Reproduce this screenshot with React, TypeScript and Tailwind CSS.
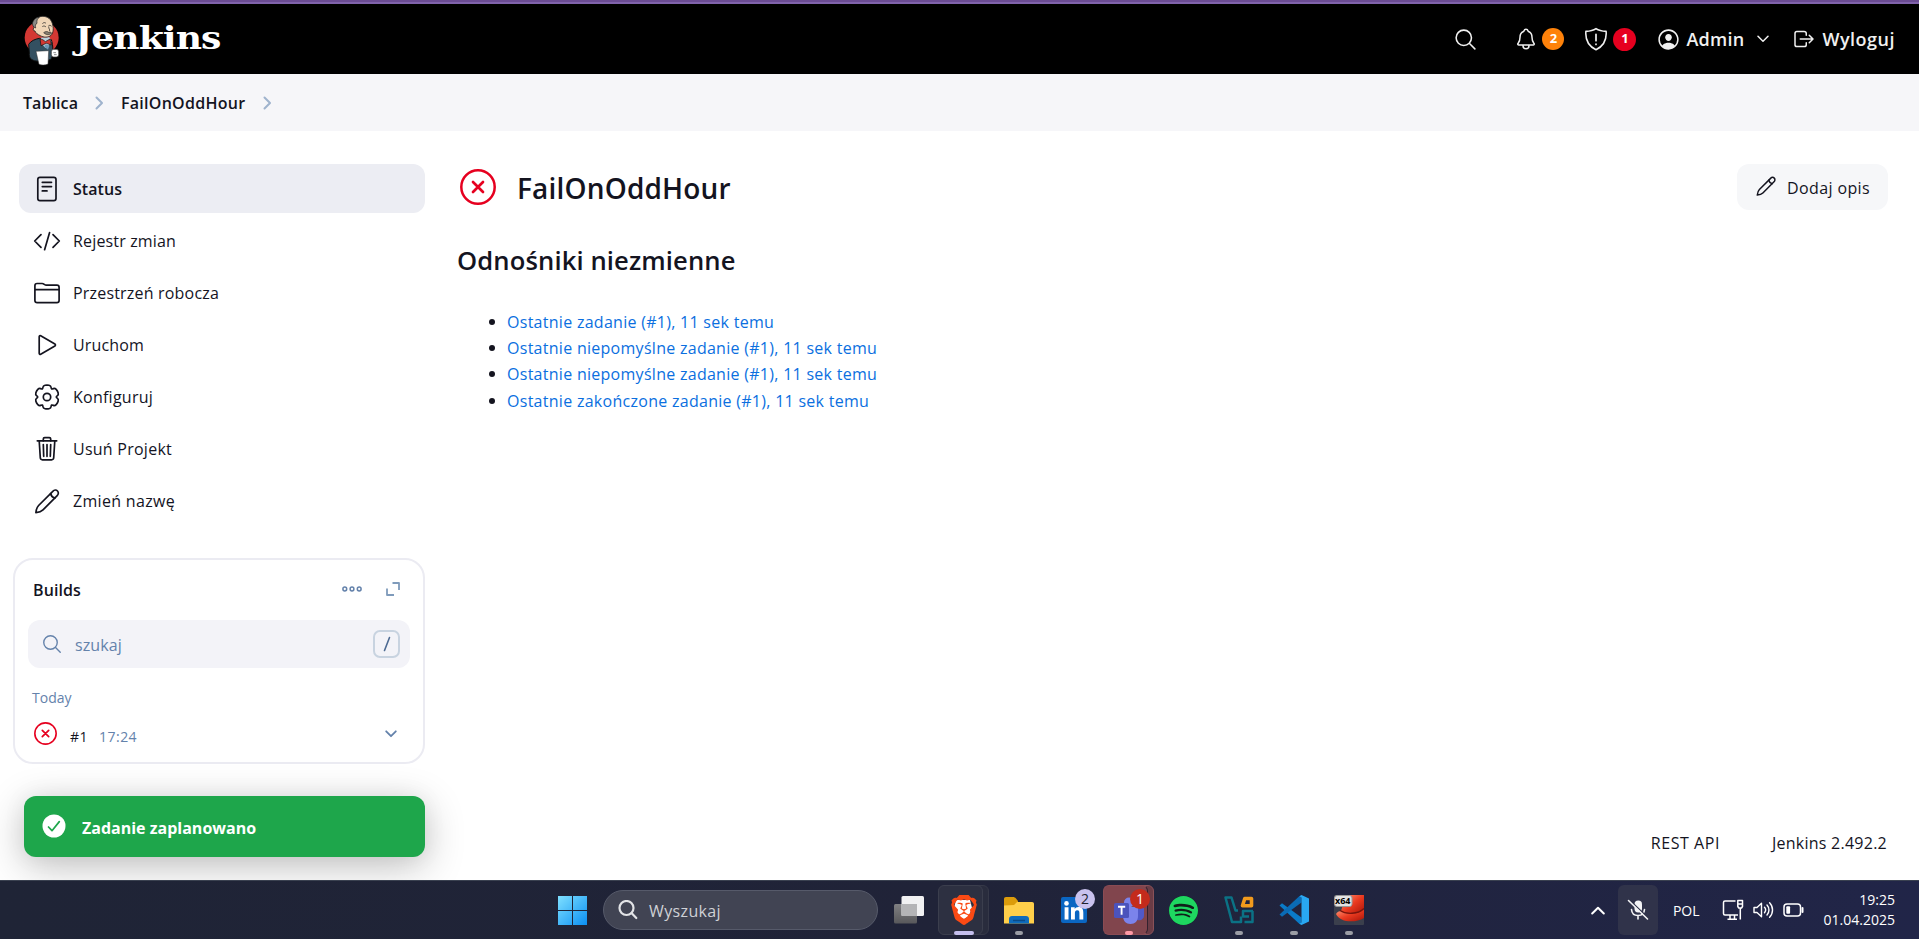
import React from 'react';
import { IoSearchOutline, IoNotificationsOutline, IoPersonCircleOutline, IoLogOutOutline } from 'react-icons/io5';
import { SiBrave, SiSpotify } from 'react-icons/si';

type IconProps = { children: React.ReactNode; size?: number; className?: string; width?: number };

function Glyph({ children, size = 28, className = '', width = 1.7 }: IconProps) {
  return (
    <svg
      viewBox="0 0 28 28"
      width={size}
      height={size}
      fill="none"
      stroke="currentColor"
      strokeWidth={width}
      strokeLinecap="round"
      strokeLinejoin="round"
      className={`shrink-0 ${className}`}
    >
      {children}
    </svg>
  );
}

function gearPath() {
  const pts: [number, number][] = [];
  for (let k = 0; k < 6; k++) {
    for (const [r, d] of [[9.3, -27], [11.9, -19], [12.2, 0], [11.9, 19], [9.3, 27]]) {
      const a = ((-90 + 60 * k + d) * Math.PI) / 180;
      pts.push([14 + r * Math.cos(a), 14 + r * Math.sin(a)]);
    }
  }
  const mid = (a: [number, number], b: [number, number]) => `${((a[0] + b[0]) / 2).toFixed(2)} ${((a[1] + b[1]) / 2).toFixed(2)}`;
  let d = `M${mid(pts[pts.length - 1], pts[0])}`;
  pts.forEach((p, i) => {
    d += `Q${p[0].toFixed(2)} ${p[1].toFixed(2)} ${mid(p, pts[(i + 1) % pts.length])}`;
  });
  return d + 'Z';
}

const pencil = (
  <>
    <path d="M2.900 25.600c.3-3.400 1-5.400 2.700-7.100L19.800 4.300c1.400-1.400 3.500-1.500 4.700-.3s1.100 3.300-.3 4.700L10 22.900c-1.700 1.700-3.700 2.400-7.100 2.700z" />
    <path d="M17.600 6.500c.5 2.400 2.100 4 4.400 4.500" />
  </>
);

const tasks = [
  {
    label: 'Rejestr zmian',
    tracking: 'tracking-[0.16px]',
    icon: <path d="M8 7.700 1.700 14 8 20.300M20 7.700l6.300 6.300-6.300 6.300M16.600 5.500l-5 17.200" />,
  },
  {
    label: 'Przestrzeń robocza',
    tracking: 'tracking-[0.19px]',
    icon: <path d="M1.900 21.500V6.700c0-1.400.8-2.200 2.200-2.200h5c2 0 2.300 1.700 4.300 1.700h10.500c1.400 0 2.200.8 2.200 2.200v13.100c0 1.400-.8 2.200-2.200 2.200H4.100c-1.400 0-2.200-.8-2.200-2.200zM1.900 10.700h24.200" />,
  },
  {
    label: 'Uruchom',
    tracking: 'tracking-[0.15px]',
    icon: <path d="M6.200 5.700v16.600c0 .9.800 1.300 1.500.9l14.200-8.300c.7-.4.7-1.400 0-1.800L7.700 4.800c-.7-.4-1.500 0-1.500.9z" />,
  },
  {
    label: 'Konfiguruj',
    tracking: 'tracking-[0.25px]',
    icon: (
      <>
        <path d={gearPath()} />
        <circle cx="14" cy="14" r="3.700" />
      </>
    ),
  },
  {
    label: 'Usuń Projekt',
    tracking: 'tracking-[0.25px]',
    icon: (
      <>
        <path d="M4.300 5.800h19.400M6.200 5.800l1.100 17c.1 1.200.9 2 2.100 2h9.200c1.200 0 2-.8 2.100-2l1.100-17" />
        <path d="M10.300 5.800V4c0-.9.500-1.400 1.400-1.400h4.600c.9 0 1.400.5 1.400 1.400v1.800M10.300 9.500l.4 11.800M14 9.500v11.800M17.700 9.500l-.4 11.800" />
      </>
    ),
  },
  { label: 'Zmień nazwę', tracking: 'tracking-[0.31px]', icon: pencil },
];

function Butler() {
  return (
    <svg viewBox="0 0 180 192" width="60" height="64" className="shrink-0">
      <ellipse cx="77" cy="92" rx="51" ry="50" fill="#d33833" />
      <path d="M38 112c6-10 20-16 32-18l36 4c6 18 6 42 0 58-14 8-30 8-46 6-14-2-22-10-20-24z" fill="#335061" stroke="#111" strokeWidth="3" />
      <path d="M74 92c2 16 8 28 18 32l14-20-6-14z" fill="#b9d2df" />
      <path d="M54 62c-5-12 0-28 18-33 17-4 32 4 37 20 4 14 4 28-4 36-8 7-22 7-32 1-9-4-14-8-16-14-6 0-7-5-3-10z" fill="#f0d6b7" stroke="#222" strokeWidth="2.500" />
      <path d="M70 31c-7 4-8 10-7 18-6 2-5 8-4 14-9-3-12-14-7-21 3-6 10-12 18-11z" fill="#8a8a86" stroke="#222" strokeWidth="2" />
      <path d="M80 58c3-2 7-1 9 1M98 56c2-2 6-1 8 1M80 49c3-3 7-3 9-1M98 60c-1 5 5 7 3 11" fill="none" stroke="#222" strokeWidth="2.200" strokeLinecap="round" />
      <path d="M83 77c6-5 12-4 15-1 5-2 8 0 9 3-7 5-16 6-24-2z" fill="#867e70" stroke="#222" strokeWidth="1.800" />
      <path d="M72 96c6 0 12 4 16 8l14-8 4 18-15-5-16 7z" fill="#d33833" stroke="#111" strokeWidth="2" />
      <path d="M84 118l6-6 10 4-4 12z" fill="#6d97b5" />
      <path d="M60 133l38-2-2 40c-8 4-20 4-27 1z" fill="#fff" stroke="#333" strokeWidth="1.500" />
      <rect x="106" y="127" width="22" height="23" rx="7" fill="#fff" stroke="#333" strokeWidth="2" />
      <path d="M112 137h8M114 143h8" stroke="#555" strokeWidth="2" />
    </svg>
  );
}

function ErrorBall({ size }: { size: number }) {
  return (
    <svg viewBox="0 0 36 36" width={size} height={size} fill="none" stroke="#e6001f" strokeLinecap="round" className="shrink-0">
      <circle cx="18" cy="18" r="16.700" strokeWidth="2.500" />
      <path d="M13 13l10 10M23 13 13 23" strokeWidth="2.700" />
    </svg>
  );
}

function Header() {
  return (
    <header className="flex h-[70px] items-center bg-black pl-4 pr-6 text-white">
      <Butler />
      <span className="-ml-px -mt-[3px] origin-left scale-x-[1.130] font-[DejaVu_Serif,serif] text-[32px] font-bold leading-[40px] tracking-[-0.800px]">Jenkins</span>
      <div className="ml-auto flex items-center text-[18px] font-semibold text-[#f0f0f0]">
        <IoSearchOutline className="mr-[36px] size-[25px]" />
        <IoNotificationsOutline className="mr-[4px] size-[24px]" />
        <span className="mr-[20px] flex size-[22px] items-center justify-center rounded-full bg-[#fe820a] text-[13px] font-bold text-white">2</span>
        <Glyph size={24} className="mr-[5px]" width={1.800}>
          <path d="M14 1.800c3 2 7 3 11.800 3.300.8 9.300-2 16.600-11.800 21.400C4.200 21.700 1.400 14.400 2.200 5.100 7 4.800 11 3.800 14 1.800z" />
          <path d="M14 8.500v7.500M14 20v.4" strokeWidth="2" />
        </Glyph>
        <span className="mr-[20px] flex size-[23px] items-center justify-center rounded-full bg-[#e6001f] text-[13px] font-bold text-white">1</span>
        <IoPersonCircleOutline className="mr-[5px] size-[25px]" />
        <span className="tracking-[0.250px]">Admin</span>
        <svg width="12" height="8" viewBox="0 0 12 8" fill="none" stroke="currentColor" strokeWidth="1.500" strokeLinecap="round" strokeLinejoin="round" className="ml-[13px] mr-[23px]">
          <path d="M1 1.300l5 5 5-5" />
        </svg>
        <IoLogOutOutline className="mr-[6px] size-[24px]" />
        <span className="tracking-[0.500px]">Wyloguj</span>
      </div>
    </header>
  );
}

function Crumb() {
  return (
    <svg width="9" height="14" viewBox="0 0 9 14" fill="none" stroke="#9fb3cd" strokeWidth="2" strokeLinecap="round" strokeLinejoin="round">
      <path d="M1.500 1.500 7 7l-5.500 5.500" />
    </svg>
  );
}

function Sidebar() {
  return (
    <aside className="w-[425px] shrink-0">
      <nav className="ml-[19px] flex flex-col gap-[3px]">
        <a className="flex h-[49px] items-center rounded-xl bg-[#ecedf3] pl-[14px] font-semibold tracking-[0.05px]">
          <Glyph className="mr-[12px]">
            <rect x="4.800" y="2.300" width="18.200" height="23.400" rx="2.200" />
            <path d="M9.300 7.300h9.200M9.300 11.600h9.200M9.300 15.900h4.700" />
          </Glyph>
          Status
        </a>
        {tasks.map((t) => (
          <a key={t.label} className={`flex h-[49px] items-center pl-[14px] ${t.tracking}`}>
            <Glyph className="mr-[12px]">{t.icon}</Glyph>
            {t.label}
          </a>
        ))}
      </nav>

      <section className="ml-[13px] mt-[33px] flex h-[206px] flex-col rounded-[20px] border-2 border-[#ebebf2] pl-[13px] pr-[13px]">
        <div className="mt-[15px] flex h-[28px] items-center pl-[5px]">
          <h2 className="mt-px font-semibold tracking-[0.1px]">Builds</h2>
          <svg width="20" height="6" viewBox="0 0 20 6" fill="none" stroke="#6482ab" strokeWidth="1.500" className="ml-auto mr-[24px]">
            <circle cx="2.800" cy="3" r="1.900" />
            <circle cx="10" cy="3" r="1.900" />
            <circle cx="17.200" cy="3" r="1.900" />
          </svg>
          <svg width="14" height="14" viewBox="0 0 14 14" fill="none" stroke="#7f9bbb" strokeWidth="1.800" strokeLinejoin="round" className="mr-[10px]">
            <path d="M6.500 1H13v7M1 6.500V13h7" />
          </svg>
        </div>
        <div className="mt-[17px] flex h-[48px] items-center rounded-xl bg-[#f3f3f8] pl-[13px] pr-[10px] text-[#6482ab]">
          <IoSearchOutline className="size-[22px]" />
          <span className="ml-[12px] mt-px tracking-[0.12px]">szukaj</span>
          <kbd className="ml-auto flex h-[28px] w-[27px] items-center justify-center rounded-[7px] border-2 border-[#c8d3e0]">
            <svg width="8" height="16" viewBox="0 0 8 16" stroke="#4d6a92" strokeWidth="1.600" strokeLinecap="round">
              <path d="M6.500 1.500 1.500 14.500" />
            </svg>
          </kbd>
        </div>
        <p className="mt-[20px] pl-[4px] text-sm text-[#6482ab]">Today</p>
        <div className="mt-[14px] flex h-[26px] items-center pl-[6px] text-sm">
          <span className="-mt-[4px] flex"><ErrorBall size={23} /></span>
          <span className="ml-[13px] mt-[3px] tracking-[0.500px]">#1</span>
          <span className="ml-[11px] mt-[3px] tracking-[0.46px] text-[#6482ab]">17:24</span>
          <svg width="12" height="8" viewBox="0 0 12 8" fill="none" stroke="#6482ab" strokeWidth="1.800" strokeLinecap="round" strokeLinejoin="round" className="-mt-[2px] ml-auto mr-[13px]">
            <path d="M1.200 1.300 6 6.200l4.800-4.900" />
          </svg>
        </div>
      </section>

      <div className="ml-[24px] mt-[32px] flex h-[61px] items-center rounded-xl bg-[#1ea64b] pl-[18px] font-bold text-white shadow-[0_10px_40px_rgba(0,0,0,0.24),0_0_24px_rgba(0,0,0,0.06)]">
        <svg width="24" height="24" viewBox="0 0 24 24" className="-mt-[2px]">
          <circle cx="12" cy="12" r="11.500" fill="#fff" />
          <path d="M6.500 13l3.500 3.700L17.300 7.600" fill="none" stroke="#1ea64b" strokeWidth="1.700" strokeLinecap="round" strokeLinejoin="round" />
        </svg>
        <span className="ml-[16px] mt-[2px]">Zadanie zaplanowano</span>
      </div>
    </aside>
  );
}

const links = [
  'Ostatnie zadanie (#1), 11 sek temu',
  'Ostatnie niepomyślne zadanie (#1), 11 sek temu',
  'Ostatnie niepomyślne zadanie (#1), 11 sek temu',
  'Ostatnie zakończone zadanie (#1), 11 sek temu',
];

function Main() {
  return (
    <main className="flex flex-1 flex-col pl-[33px] pr-[31px]">
      <div className="flex h-[46px] items-center">
        <span className="ml-[2px] flex"><ErrorBall size={36} /></span>
        <h1 className="ml-[21px] mt-px text-[28px] font-semibold tracking-[0.18px]">FailOnOddHour</h1>
        <button className="ml-auto flex h-[46px] w-[151px] items-center rounded-xl bg-[#f6f7f9] pl-[18px] tracking-[0.38px]">
          <Glyph size={22} width={1.900} className="-mt-[2px] mr-[10px]">{pencil}</Glyph>
          <span className="mt-px">Dodaj opis</span>
        </button>
      </div>
      <h2 className="-ml-px mt-[33px] text-[25.600px] font-semibold leading-[36px] tracking-[0.120px]">Odnośniki niezmienne</h2>
      <ul className="mt-[30px] text-[#0b6fe0]">
        {links.map((l, i) => (
          <li key={i} className="flex h-[26.200px] items-center tracking-[0.280px]">
            <span className="ml-[31px] mr-[12px] size-[6px] rounded-full bg-[#14141f]" />
            {l}
          </li>
        ))}
      </ul>
      <footer className="mb-[25px] mt-auto flex justify-end">
        <span className="mr-[52px] tracking-[0.550px]">REST API</span>
        <span className="mr-px tracking-[0.25px]">Jenkins 2.492.2</span>
      </footer>
    </main>
  );
}

function Slot({ children, mark = '' }: { children: React.ReactNode; mark?: string }) {
  return (
    <div className="relative flex h-[59px] w-[55px] shrink-0 items-center justify-center">
      {children}
      {mark && <span className={`absolute bottom-[5px] left-1/2 h-1 -translate-x-1/2 rounded-full ${mark}`} />}
    </div>
  );
}

function Taskbar() {
  return (
    <div className="flex h-[59px] items-center border-t border-[#3a4150] bg-gradient-to-r from-[#1f2436] via-[#202338] to-[#212548] text-white">
      <div className="ml-[545px] flex items-center">
        <Slot>
          <svg width="29" height="29" viewBox="0 0 29 29" className="mt-px">
            <defs>
              <linearGradient id="win" x1="0" y1="0" x2="1" y2="1">
                <stop offset="0" stopColor="#7fe0ff" />
                <stop offset="1" stopColor="#0b8ff2" />
              </linearGradient>
            </defs>
            <path d="M0 0h14v14H0zM15 0h14v14H15zM0 15h14v14H0zM15 15h14v14H15z" fill="url(#win)" />
          </svg>
        </Slot>
        <div className="ml-[3px] mr-[3px] flex h-[40px] w-[275px] items-center rounded-full border border-[#565a6a] bg-[#414453] pl-[14px] text-[#cfd1d6]">
          <svg width="20" height="20" viewBox="0 0 20 20" fill="none" stroke="#e2e3e6" strokeWidth="2.200" strokeLinecap="round">
            <circle cx="8.500" cy="8" r="7" />
            <path d="M13.500 13l4.800 5" />
          </svg>
          <span className="ml-[11px] mt-px tracking-[0.370px]">Wyszukaj</span>
        </div>
        <Slot>
          <svg width="30" height="28" viewBox="0 0 30 28">
            <defs>
              <linearGradient id="pane" x1="0" y1="0" x2="0" y2="1">
                <stop offset="0" stopColor="#808082" />
                <stop offset="1" stopColor="#58585b" />
              </linearGradient>
            </defs>
            <rect x="0" y="8" width="23" height="19.500" rx="1.500" fill="url(#pane)" />
            <rect x="7.500" y="0" width="22.500" height="20" rx="1.500" fill="#f1f1f2" />
            <path d="M7.500 8H23v12H7.500z" fill="#b4b4b6" />
          </svg>
        </Slot>
        <Slot mark="w-5 bg-[#c5bfee]">
          <span className="absolute left-[6px] top-[4px] h-[50px] w-[47px] rounded-md border border-[#353848] bg-[#292c3d]" />
          <span className="absolute left-[2px] top-[4px] h-[50px] w-[45px] rounded-md border border-[#3b3e4d] bg-[#2d3041]" />
          <svg width="26" height="31" viewBox="0 0 26 31" className="absolute left-[14px] top-[13px]">
            <path d="M6 6h14l2 8-3 8-6 4-6-4-3-8z" fill="#fff" />
          </svg>
          <SiBrave className="relative size-[30px] text-[#fb4a14]" />
        </Slot>
        <Slot mark="w-2 bg-[#9b9da5]">
          <svg width="30" height="27" viewBox="0 0 30 27" className="mt-px">
            <path d="M0 6V2C0 .8.700 0 2 0h7c1.400 0 2 .5 3 1.500L14 4v6H0z" fill="#dc9c0b" />
            <path d="M0 8.500l10-.5 3-3h15c1.300 0 2 .7 2 2v19.500H0z" fill="#ffcf4a" />
            <path d="M5 26.500V22c0-1.800 1.200-3 3-3h14c1.800 0 3 1.200 3 3v4.500z" fill="#0f6cbd" />
            <path d="M9 23.500h12" stroke="#0a4b88" strokeWidth="1.500" />
          </svg>
        </Slot>
        <Slot>
          <span className="flex size-[26px] items-center justify-center rounded-[2px] bg-[#0a66c2]">
            <svg width="20" height="19" viewBox="0 0 20 19" fill="#fff">
              <circle cx="2.500" cy="2.400" r="2.300" />
              <path d="M.6 6.200h3.900v12.300H.6zM7 6.200h3.700v1.700c.6-1.100 1.900-2 3.900-2 3.900 0 4.700 2.500 4.700 5.900v6.700h-3.900v-6c0-1.400 0-3.200-2.100-3.200s-2.400 1.500-2.400 3.100v6.100H7z" />
            </svg>
          </span>
          <span className="absolute left-[29px] top-[8px] flex size-5 items-center justify-center rounded-full bg-[#c9c2ee] text-[14px] text-[#20222e]">2</span>
        </Slot>
        <Slot mark="w-2 bg-[#ff9aa6]">
          <span className="absolute left-[6px] top-[4px] h-[50px] w-[47px] rounded-md border border-[#8a5158] bg-[#6a3c46]" />
          <span className="absolute left-[2px] top-[4px] h-[50px] w-[45px] rounded-md border border-r-[#33222f] border-[#8a4c54] bg-[#81454d]" />
          <svg width="30" height="28" viewBox="0 0 30 28" className="relative mt-px">
            <circle cx="15" cy="5.500" r="5" fill="#7b83eb" />
            <path d="M22 10h8v8c0 4-3 6-7 5z" fill="#5059c9" />
            <path d="M9 10h15v9c0 5-3 8-7.500 8S9 24 9 19z" fill="#7b83eb" />
            <rect x="0" y="6" width="15" height="15" rx="1.500" fill="#4b53bc" />
            <path d="M4 9.800h7.200M7.600 9.800v8" stroke="#fff" strokeWidth="1.900" />
          </svg>
          <span className="absolute left-[29px] top-[8px] flex size-5 items-center justify-center rounded-full bg-[#c42b1c] text-[14px]">1</span>
        </Slot>
        <Slot>
          <span className="flex size-[29px] items-center justify-center rounded-full bg-[#10201a]">
            <SiSpotify className="size-[29px] text-[#1ed760]" />
          </span>
        </Slot>
        <Slot mark="w-2 bg-[#9b9da5]">
          <svg width="30" height="28" viewBox="0 0 30 28" fill="none" strokeWidth="2.500" strokeLinejoin="round">
            <path d="M14 14.500h-2.500L7.500 1.500h-6l6.500 24.500h9v-5.500" stroke="#0b7285" />
            <path d="M29 15H19v5.500h6M28.500 15v11H20.500" stroke="#0b7285" />
            <path d="M20.800 2.500h6.700v7.300h-9z" stroke="#f29b1d" strokeWidth="3.600" />
          </svg>
        </Slot>
        <Slot mark="w-2 bg-[#9b9da5]">
          <svg width="30" height="30" viewBox="0 0 30 30">
            <path d="M.5 10.500 3 8.300l19.500 14.200V29.500L20.500 29z" fill="#0a7bc8" />
            <path d="M.5 19.500 3 21.700 22.500 7.500V.5L20.500 1z" fill="#0a6bb5" />
            <path d="M22.500 0 30 3.500v23L22.500 30l-2-1.200 2-1.300v-25l-2-1.300z" fill="#29a8f2" />
          </svg>
        </Slot>
        <Slot mark="w-2 bg-[#9b9da5]">
          <svg width="30" height="30" viewBox="0 0 30 30">
            <defs>
              <linearGradient id="disc" x1="0" y1="0" x2="1" y2="1">
                <stop offset="0" stopColor="#ff9a7a" />
                <stop offset=".5" stopColor="#ea3a20" />
                <stop offset="1" stopColor="#a81408" />
              </linearGradient>
            </defs>
            <rect width="30" height="30" rx="1" fill="#3b3f4c" />
            <path d="M12 0h18v14c-3 6-16 7-23 2z" fill="url(#disc)" />
            <path d="M2 19c1-2 3-3 5-3 6 4 17 4 23-2v9c-8 5-24 5-28-4z" fill="url(#disc)" />
            <path d="M6 15.500c6 4 18 4 24-2" stroke="#7a150c" strokeWidth="1.300" fill="none" />
            <rect x=".5" y=".5" width="17.500" height="11" rx="2.500" fill="#e3e3e3" stroke="#999" />
          </svg>
          <span className="absolute left-[14px] top-[15px] text-[9px] font-bold leading-[10px] text-black">x64</span>
        </Slot>
      </div>

      <div className="ml-auto flex items-center pr-[24px]">
        <svg width="14" height="9" viewBox="0 0 14 9" fill="none" stroke="#fff" strokeWidth="2" strokeLinecap="round" strokeLinejoin="round">
          <path d="M1.200 7.500 7 1.700l5.800 5.800" />
        </svg>
        <div className="ml-[13px] flex h-[50px] w-[40px] items-center justify-center rounded-md bg-[#30334a]">
          <svg width="22" height="22" viewBox="0 0 22 22" fill="none" stroke="#f3f3f5" strokeWidth="1.600" strokeLinecap="round">
            <rect x="7.500" y="1.500" width="7.500" height="12" rx="3.700" fill="#f3f3f5" stroke="none" />
            <path d="M4.500 10.500c.3 4 3.200 6 6.500 6s6.200-2 6.500-6M11 16.500V20" />
            <path d="M3.300 1.700 21 18.700" stroke="#30334a" strokeWidth="1.500" />
            <path d="M1.500 1.500 20.500 20" />
          </svg>
        </div>
        <span className="ml-[15px] w-[27px] text-[14px] tracking-[-0.050px]">POL</span>
        <svg width="22" height="22" viewBox="0 0 22 22" fill="none" stroke="#fff" strokeWidth="1.500" strokeLinejoin="round" className="ml-[22px]">
          <path d="M13.500 2H3C2 2 1.500 2.500 1.500 3.500v11c0 1 .5 1.500 1.500 1.500h13M8 16v4M12.500 16v4M5.500 20.300h9.500M18.300 9v11.500" />
          <path d="M15.800 1.500h4.700v6l-1 1.500h-2.700l-1-1.500zM15.800 5h4.700" />
        </svg>
        <svg width="21" height="18" viewBox="0 0 21 18" fill="none" stroke="#fff" strokeWidth="1.400" strokeLinecap="round" strokeLinejoin="round" className="ml-[9px]">
          <path d="M1 6.500v5h3l4.500 4.200V2.300L4 6.500zM11.500 6.300c1.300 1.500 1.300 3.900 0 5.400M14 4c2.600 2.800 2.600 7.200 0 10M16.600 1.800c3.900 4 3.900 10.400 0 14.400" />
        </svg>
        <svg width="21" height="14" viewBox="0 0 21 14" fill="none" stroke="#fff" strokeWidth="1.500" className="ml-[9px]">
          <rect x="1" y="1" width="16.500" height="12" rx="3" />
          <path d="M19.500 5v4" strokeLinecap="round" strokeWidth="2" />
          <rect x="3.300" y="3.300" width="3.800" height="7.400" rx="1" fill="#fff" stroke="none" />
        </svg>
        <div className="ml-[18px] w-[73px] text-right text-[14px] leading-5">
          <div>19:25</div>
          <div>01.04.2025</div>
        </div>
      </div>
    </div>
  );
}

export default function App() {
  return (
    <div className="flex h-[939px] w-[1919px] flex-col overflow-hidden bg-white font-[Open_Sans,Noto_Sans,sans-serif] text-base text-[#14141f]">
      <div className="h-[4px] shrink-0 border-b-2 border-[#8063ab] bg-[#6b4c93]" />
      <Header />
      <div className="flex h-[57px] items-center bg-[#f6f6f9] pl-[23px] font-semibold">
        <span className="mr-[17px] tracking-[0.080px]">Tablica</span>
        <Crumb />
        <span className="ml-[17px] mr-[18px] tracking-[0.270px]">FailOnOddHour</span>
        <Crumb />
      </div>
      <div className="flex min-h-0 flex-1 overflow-hidden pt-[33px]">
        <Sidebar />
        <Main />
      </div>
      <Taskbar />
    </div>
  );
}
